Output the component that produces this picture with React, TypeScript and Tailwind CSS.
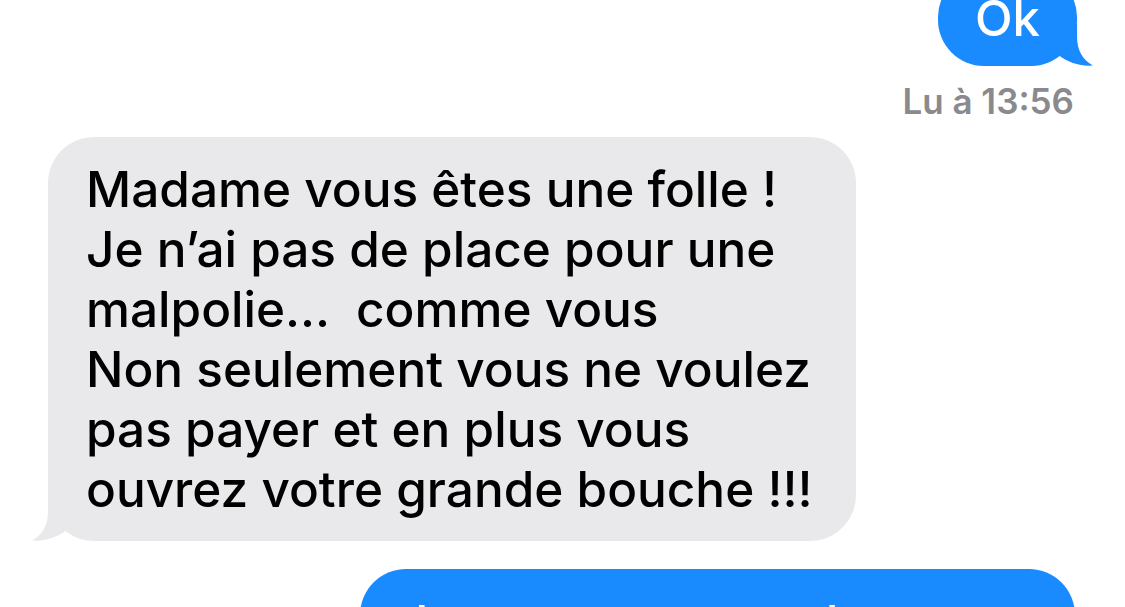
import React from 'react';

const FONT = "font-['Inter','Noto_Sans',sans-serif]";

// little curled tail drawn under the bubble corner (left-hand version, mirrored for the right)
const Tail: React.FC<{ color: string; side: 'left' | 'right' }> = ({ color, side }) => (
  <svg
    width="68"
    height="42"
    viewBox="0 0 68 42"
    className={`absolute bottom-0 ${side === 'left' ? '-left-[16px]' : '-right-[16px] scale-x-[-1]'}`}
  >
    <path d="M16 0 L16 12 C16 27 10 36 0 41.5 C12 42.5 25 39 35 30.5 C44 38 54 42 68 42 L68 0 Z" fill={color} />
  </svg>
);

const lines = [
  'Madame vous êtes une folle !',
  'Je n’ai pas de place pour une',
  'malpolie…  comme vous',
  'Non seulement vous ne voulez',
  'pas payer et en plus vous',
  'ouvrez votre grande bouche !!!',
];

export default function App() {
  return (
    <div className={`h-[607px] w-full overflow-hidden bg-white flex flex-col ${FONT}`}>
      {/* outgoing "Ok" */}
      <div className="self-end mr-[48px] -mt-[29px] relative">
        <Tail color="#1a8bff" side="right" />
        <div className="relative h-[95px] w-[139px] rounded-[46px] bg-[#1a8bff] text-white text-[49px] leading-[60px] font-medium flex items-center justify-center">
          Ok
        </div>
      </div>

      <div className="self-end mr-[51px] mt-[14px] text-[35px] leading-[42px] font-semibold text-[#8a8a8e]">
        Lu à 13:56
      </div>

      {/* incoming message */}
      <div className="ml-[48px] mt-[15px] relative w-[808px]">
        <Tail color="#e9e9eb" side="left" />
        <div className="relative rounded-[46px] bg-[#e9e9eb] px-[38px] py-[22px] text-black text-[49.5px] leading-[60px] font-medium whitespace-pre">
          {lines.map((l) => (
            <div key={l}>{l}</div>
          ))}
        </div>
      </div>

      {/* outgoing reply, runs past the bottom */}
      <div className="ml-[360px] mt-[28px] w-[715px] shrink-0 rounded-[46px] bg-[#1a8bff] px-[40px] py-[24px] text-white text-[49.5px] leading-[60px] font-medium">
        Je vous comprends, même si vous ne voulez pas
      </div>
    </div>
  );
}
